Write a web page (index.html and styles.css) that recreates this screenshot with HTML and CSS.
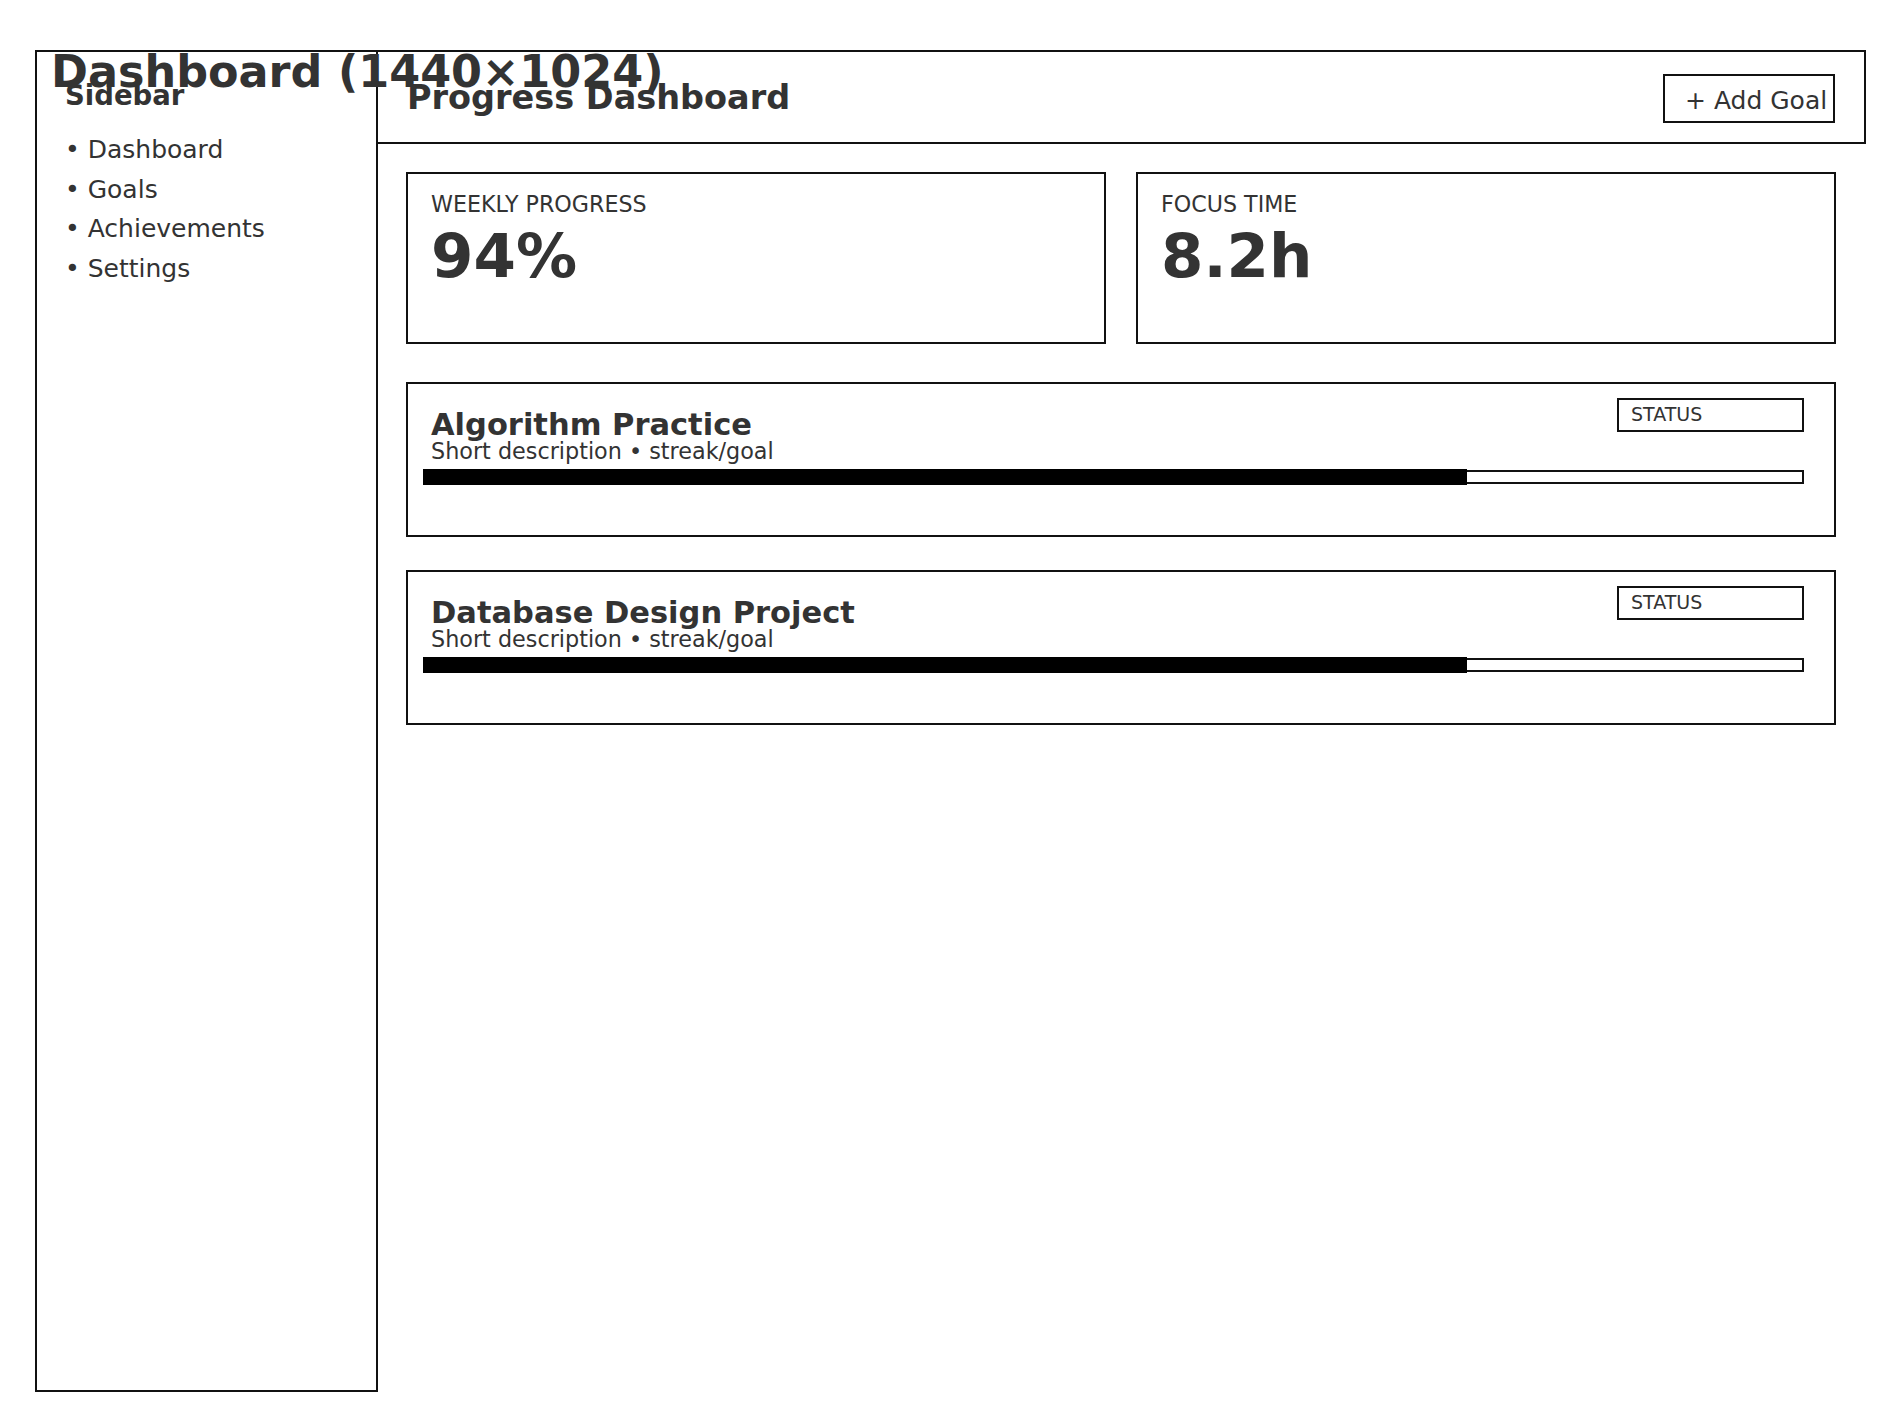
FILE: index.html
```html
<!DOCTYPE html>
<html lang="en">
<head>
<meta charset="utf-8">
<title>Dashboard (1440×1024)</title>
<link rel="stylesheet" href="styles.css">
</head>
<body>
<div class="page">
  <h1 class="frame-title">Dashboard (1440×1024)</h1>
  <div class="layout">
    <aside class="sidebar">
      <div class="sidebar-title">Sidebar</div>
      <ul class="nav">
        <li>• Dashboard</li>
        <li>• Goals</li>
        <li>• Achievements</li>
        <li>• Settings</li>
      </ul>
    </aside>
    <main class="main">
      <header class="topbar">
        <div class="topbar-title">Progress Dashboard</div>
        <button class="add-btn">+ Add Goal</button>
      </header>
      <section class="content">
        <div class="stats">
          <div class="stat-card">
            <div class="stat-label">WEEKLY PROGRESS</div>
            <div class="stat-value">94%</div>
          </div>
          <div class="stat-card">
            <div class="stat-label">FOCUS TIME</div>
            <div class="stat-value">8.2h</div>
          </div>
        </div>
        <div class="goals">
          <div class="goal-card">
            <div class="goal-head">
              <div class="goal-text">
                <div class="goal-title">Algorithm Practice</div>
                <div class="goal-sub">Short description • streak/goal</div>
              </div>
              <div class="status">STATUS</div>
            </div>
            <div class="track"><div class="fill" style="width: 75.8%"></div></div>
          </div>
          <div class="goal-card">
            <div class="goal-head">
              <div class="goal-text">
                <div class="goal-title">Database Design Project</div>
                <div class="goal-sub">Short description • streak/goal</div>
              </div>
              <div class="status">STATUS</div>
            </div>
            <div class="track"><div class="fill" style="width: 75.8%"></div></div>
          </div>
        </div>
      </section>
    </main>
  </div>
</div>
</body>
</html>
```
FILE: styles.css
```css
* { box-sizing: border-box; }

html, body {
  margin: 0;
  padding: 0;
  background: #ffffff;
}

body {
  font-family: "DejaVu Sans", "Liberation Sans", sans-serif;
  color: #333333;
}

.page {
  position: relative;
  padding: 50px 0 0 35px;
  width: 1900px;
  height: 1426px;
}

.frame-title {
  position: absolute;
  left: 51px;
  top: 47px;
  margin: 0;
  font-size: 44.5px;
  line-height: 50px;
  font-weight: bold;
  color: #333333;
  white-space: nowrap;
  z-index: 2;
}

.layout {
  display: flex;
  align-items: flex-start;
}

.sidebar {
  flex: 0 0 343px;
  height: 1342px;
  border: 2px solid #111111;
  padding: 27px 0 0 28px;
}

.sidebar-title {
  font-size: 27.5px;
  line-height: 32px;
  font-weight: bold;
}

.nav {
  list-style: none;
  margin: 19px 0 0 0;
  padding: 0;
  font-size: 25px;
  line-height: 39.5px;
}

.main {
  flex: 0 0 1488px;
}

.topbar {
  display: flex;
  justify-content: space-between;
  align-items: flex-start;
  height: 94px;
  border: 2px solid #111111;
  border-left: 0;
  padding: 22px 29px 0 29px;
}

.topbar-title {
  margin-top: 5px;
  font-size: 33.5px;
  line-height: 38px;
  font-weight: bold;
}

.add-btn {
  width: 172px;
  height: 49px;
  border: 2px solid #111111;
  background: #ffffff;
  color: #333333;
  font-family: inherit;
  font-size: 25px;
  line-height: 29px;
  padding: 3px 0 0 20px;
  text-align: left;
  white-space: nowrap;
  align-self: flex-start;
  margin: 0;
}

.content {
  padding: 28px 30px 0 28px;
}

.stats {
  display: grid;
  grid-template-columns: 1fr 1fr;
  gap: 30px;
}

.stat-card {
  height: 172px;
  border: 2px solid #111111;
  padding: 17px 23px 0 23px;
}

.stat-label {
  font-size: 22.2px;
  line-height: 26px;
}

.stat-value {
  margin-top: 4px;
  font-size: 61px;
  line-height: 70px;
  font-weight: bold;
}

.goals {
  display: flex;
  flex-direction: column;
  gap: 33px;
  margin-top: 38px;
}

.goal-card {
  border: 2px solid #111111;
  padding: 14px 30px 51px 15px;
}

.goal-head {
  display: flex;
  justify-content: space-between;
  align-items: flex-start;
}

.goal-text {
  padding-left: 8px;
  margin-top: 13px;
}

.goal-title {
  font-size: 30.5px;
  line-height: 28px;
  font-weight: bold;
}

.goal-sub {
  margin-top: 4px;
  font-size: 22.3px;
  line-height: 16px;
  white-space: nowrap;
}

.status {
  width: 187px;
  height: 34px;
  border: 2px solid #111111;
  padding: 3px 0 0 12px;
  font-size: 19px;
  line-height: 22px;
}

.track {
  position: relative;
  margin-top: 11px;
  height: 14px;
  border: 2px solid #111111;
}

.fill {
  position: absolute;
  left: -2px;
  top: -3px;
  height: 16px;
  background: #000000;
}
```
